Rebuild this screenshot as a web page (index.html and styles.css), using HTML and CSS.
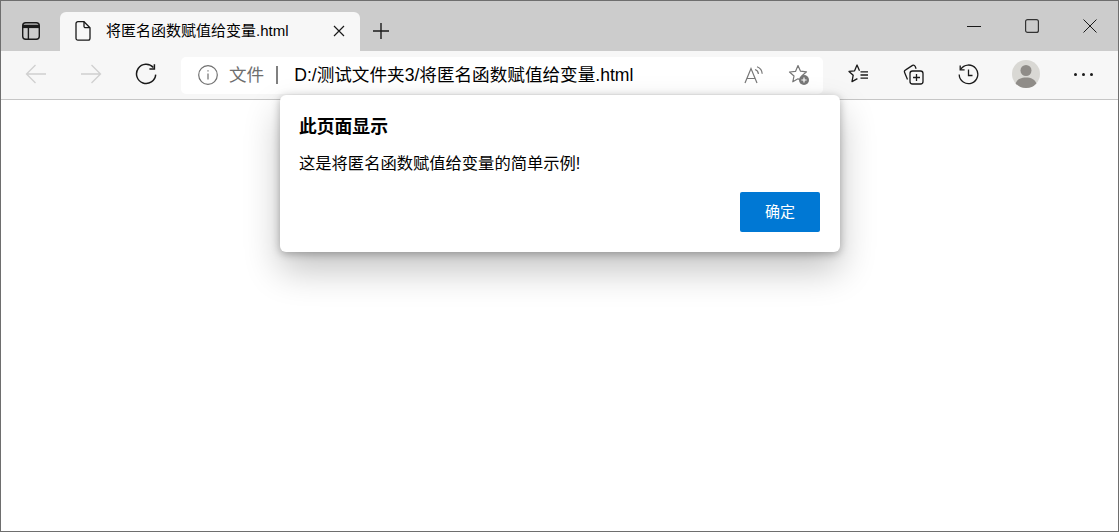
FILE: index.html
```html
<!DOCTYPE html>
<html lang="zh-CN">
<head>
    <meta charset="UTF-8">
    <title>将匿名函数赋值给变量.html</title>
    <link rel="stylesheet" href="styles.css">
</head>
<body>
    <div class="window">
        <!-- 标签栏 -->
        <div class="tabstrip">
            <button class="strip-btn tab-actions">
                <svg width="20" height="20" viewBox="0 0 20 20" fill="none" stroke="#1a1a1a" stroke-width="1.4">
                    <rect x="1.7" y="1.7" width="16.6" height="16.6" rx="3"/>
                    <path d="M2 5.4h16" stroke-width="3.4"/>
                    <path d="M7.4 6v12"/>
                </svg>
            </button>
            <div class="tab">
                <svg class="tab-file" width="16" height="20" viewBox="0 0 16 20" fill="none" stroke="#1a1a1a" stroke-width="1.3">
                    <path d="M3 .7h6l6 6v10.600a1.900 1.900 0 0 1-1.900 1.900H2.900A1.900 1.900 0 0 1 1 17.300V2.600A1.900 1.900 0 0 1 3 .7z"/>
                    <path d="M9 .7v4.500a1.500 1.500 0 0 0 1.500 1.500H15"/>
                </svg>
                <span class="tab-title">将匿名函数赋值给变量.html</span>
                <svg class="tab-close" width="12" height="12" viewBox="0 0 12 12" stroke="#1a1a1a" stroke-width="1.2">
                    <path d="M1 1l10 10M11 1L1 11"/>
                </svg>
            </div>
            <button class="strip-btn new-tab">
                <svg width="18" height="18" viewBox="0 0 18 18" stroke="#1a1a1a" stroke-width="1.4">
                    <path d="M9 1v16M1 9h16"/>
                </svg>
            </button>
            <div class="window-controls">
                <button class="win-btn">
                    <svg width="14" height="14" viewBox="0 0 14 14" stroke="#1a1a1a" stroke-width="1"><path d="M0 7.500h14"/></svg>
                </button>
                <button class="win-btn">
                    <svg width="14" height="14" viewBox="0 0 14 14" fill="none" stroke="#333" stroke-width="1.2"><rect x="0.6" y="0.6" width="12.8" height="12.8" rx="2"/></svg>
                </button>
                <button class="win-btn">
                    <svg width="14" height="14" viewBox="0 0 14 14" stroke="#1a1a1a" stroke-width="1"><path d="M0.5 0.5l13 13M13.5 0.5l-13 13"/></svg>
                </button>
            </div>
        </div>

        <!-- 工具栏 -->
        <div class="toolbar">
            <button class="nav-btn nav-back">
                <svg width="22" height="20" viewBox="0 0 22 20" fill="none" stroke="#d0d0d0" stroke-width="1.3"><path d="M21 10H1.500M10.500 1L1.500 10l9 9"/></svg>
            </button>
            <button class="nav-btn nav-forward">
                <svg width="22" height="20" viewBox="0 0 22 20" fill="none" stroke="#d0d0d0" stroke-width="1.3"><path d="M1 10h19.500M11.500 1l9 9-9 9"/></svg>
            </button>
            <button class="nav-btn nav-reload">
                <svg width="22" height="22" viewBox="0 0 22 22" fill="none" stroke="#1a1a1a" stroke-width="1.5">
                    <path d="M18.400 4.600A9.600 9.600 0 1 0 20.700 11.600"/>
                    <path d="M19.400 1.200v4.800h-5"/>
                </svg>
            </button>
            <div class="address">
                <svg class="addr-info" width="20" height="20" viewBox="0 0 20 20" fill="none" stroke="#707070" stroke-width="1.2">
                    <circle cx="10" cy="10" r="9.300"/>
                    <path d="M10 8.600v6"/>
                    <path d="M10 5.200v1.400"/>
                </svg>
                <span class="addr-label">文件</span>
                <span class="addr-sep"></span>
                <span class="addr-url">D:/测试文件夹3/将匿名函数赋值给变量.html</span>
                <svg class="addr-read" width="20" height="18" viewBox="0 0 20 18" fill="none" stroke="#777" stroke-width="1.2">
                    <path d="M1 17L7 2.500 13 17M3 12.500h8"/>
                    <path d="M11 3.500a5 5 0 0 1 3.400 4.500M13 .8a8 8 0 0 1 5.200 7"/>
                </svg>
                <svg class="addr-fav" width="22" height="22" viewBox="0 0 22 22">
                    <path d="M10 1.600l2.500 5.600 6 .6-4.500 4 1.200 5.800L10 14.800l-5.200 3 1.200-5.800-4.500-4 6-.6z" fill="none" stroke="#777" stroke-width="1.2" stroke-linejoin="round"/>
                    <circle cx="16" cy="16" r="5" fill="#777"/>
                    <path d="M16 13.400v5.200M13.400 16h5.200" stroke="#fff" stroke-width="1.2"/>
                </svg>
            </div>
            <button class="tool-btn tool-favs">
                <svg width="21" height="20" viewBox="0 0 21 20" fill="none" stroke="#1a1a1a" stroke-width="1.3" stroke-linejoin="round">
                    <path d="M11.500 6.800L9 1 6.600 6.800l-5.600.6 4.200 3.800-1.200 6.400 5.400-3"/>
                    <path d="M12.500 7.800h7.500M12.500 11h7.500M12.500 14.200h7.500"/>
                </svg>
            </button>
            <button class="tool-btn">
                <svg width="21" height="21" viewBox="0 0 21 21" fill="none" stroke="#1a1a1a" stroke-width="1.3">
                    <rect x="7" y="7" width="13" height="13" rx="2.500"/>
                    <path d="M13.500 10v7M10 13.500h7"/>
                    <path d="M4.500 15.500L1.600 8.400a2 2 0 0 1 1.100-2.600L9.500 1.400a2 2 0 0 1 2.600.9l1 2.400"/>
                </svg>
            </button>
            <button class="tool-btn">
                <svg width="21" height="21" viewBox="0 0 21 21" fill="none" stroke="#1a1a1a" stroke-width="1.3">
                    <path d="M2.600 5.400A9.300 9.300 0 1 1 1.200 10.500"/>
                    <path d="M2.200 1.400v4.400h4.400"/>
                    <path d="M10.500 5.500v6h4"/>
                </svg>
            </button>
            <div class="avatar">
                <svg width="28" height="28" viewBox="0 0 28 28">
                    <circle cx="14" cy="14" r="14" fill="#d9d8d4"/>
                    <circle cx="14" cy="10.500" r="5.500" fill="#8f8c88"/>
                    <path d="M3.600 23.400C5 19.400 9 17.600 14 17.600s9 1.800 10.400 5.800A14 14 0 0 1 14 28 14 14 0 0 1 3.600 23.400z" fill="#8f8c88"/>
                </svg>
            </div>
            <button class="tool-btn tool-more">
                <span class="dot"></span><span class="dot"></span><span class="dot"></span>
            </button>
        </div>

        <div class="page"></div>

        <!-- 弹窗 -->
        <div class="dialog">
            <h2 class="dialog-title">此页面显示</h2>
            <p class="dialog-msg">这是将匿名函数赋值给变量的简单示例!</p>
            <div class="dialog-actions">
                <button class="dialog-ok">确定</button>
            </div>
        </div>
    </div>
</body>
</html>
```

FILE: styles.css
```css
* {
    box-sizing: border-box;
}

html, body {
    margin: 0;
    height: 100%;
    overflow: hidden;
}

body {
    font-family: "Liberation Sans", "Noto Sans CJK SC", sans-serif;
    background: #ffffff;
    color: #000000;
}

button {
    border: 0;
    padding: 0;
    background: none;
    font-family: inherit;
    display: flex;
    align-items: center;
    justify-content: center;
}

svg {
    display: block;
}

.window {
    position: relative;
    width: 1119px;
    height: 532px;
    border: 1px solid #6e6e6e;
    display: flex;
    flex-direction: column;
}

/* 标签栏 */
.tabstrip {
    height: 50px;
    background: #cccccc;
    display: flex;
    align-items: flex-end;
    flex-shrink: 0;
}

.strip-btn {
    height: 39px;
    padding-bottom: 2px;
}

.tab-actions {
    width: 59px;
}

.tab {
    width: 300px;
    height: 39px;
    background: #f7f7f7;
    border-radius: 6px 6px 0 0;
    display: flex;
    align-items: center;
    padding: 0 15px 2px 15px;
}

.tab-title {
    margin-left: 15px;
    font-size: 15px;
    line-height: 20px;
    flex: 1;
    white-space: nowrap;
}

.new-tab {
    width: 42px;
}

.window-controls {
    margin-left: auto;
    align-self: flex-start;
    display: flex;
    padding: 18px 21px 0 0;
}

.win-btn {
    width: 58px;
    height: 14px;
}

.win-btn:last-child {
    width: 14px;
    margin-left: 22px;
}

.win-btn:first-child {
    width: 14px;
    margin-right: 22px;
}

/* 工具栏 */
.toolbar {
    height: 49px;
    background: #f7f7f7;
    border-bottom: 1px solid #c6c6c6;
    display: flex;
    align-items: center;
    flex-shrink: 0;
    padding: 0 0 2px 24px;
}

.nav-btn {
    width: 22px;
    height: 22px;
}

.nav-forward {
    margin-left: 33px;
}

.nav-reload {
    margin-left: 33px;
}

.address {
    margin: 2px 0 0 24px;
    width: 642px;
    height: 37px;
    background: #ffffff;
    border-radius: 5px;
    display: flex;
    align-items: center;
    padding: 0 13px 0 17px;
}

.addr-label {
    margin: 0 0 1px 11px;
    font-size: 17.6px;
    line-height: 22px;
    color: #6e6e6e;
}

.addr-sep {
    width: 2px;
    height: 18px;
    background: #808080;
    margin-left: 12px;
}

.addr-url {
    margin: 0 0 1px 16px;
    font-size: 17.6px;
    line-height: 22px;
    flex: 1;
    white-space: nowrap;
}

.addr-read {
    margin-right: 24px;
}

.tool-btn {
    width: 21px;
    height: 21px;
    margin-left: 34px;
}

.tool-favs {
    margin-left: 25px;
}

.avatar {
    margin-left: 33px;
}

.tool-more {
    margin-left: 33px;
    gap: 5px;
}

.dot {
    width: 3px;
    height: 3px;
    flex-shrink: 0;
    border-radius: 50%;
    background: #1a1a1a;
}

.page {
    flex: 1;
    background: #ffffff;
}

/* 弹窗 */
.dialog {
    position: absolute;
    left: 279px;
    top: 94px;
    width: 560px;
    height: 157px;
    background: #ffffff;
    border-radius: 6px;
    padding: 20px 20px 20px 19px;
    box-shadow: 0 18px 36px rgba(0, 0, 0, 0.24), 0 2px 8px rgba(0, 0, 0, 0.28);
    display: flex;
    flex-direction: column;
}

.dialog-title {
    margin: 0;
    font-size: 17.8px;
    line-height: 24px;
    font-weight: bold;
}

.dialog-msg {
    margin: 13px 0 0;
    font-size: 16.3px;
    line-height: 22px;
}

.dialog-actions {
    margin-top: auto;
    display: flex;
    justify-content: flex-end;
}

.dialog-ok {
    width: 80px;
    height: 40px;
    padding-bottom: 4px;
    background: #0078d4;
    color: #ffffff;
    font-size: 15px;
    border-radius: 2px;
}
```
